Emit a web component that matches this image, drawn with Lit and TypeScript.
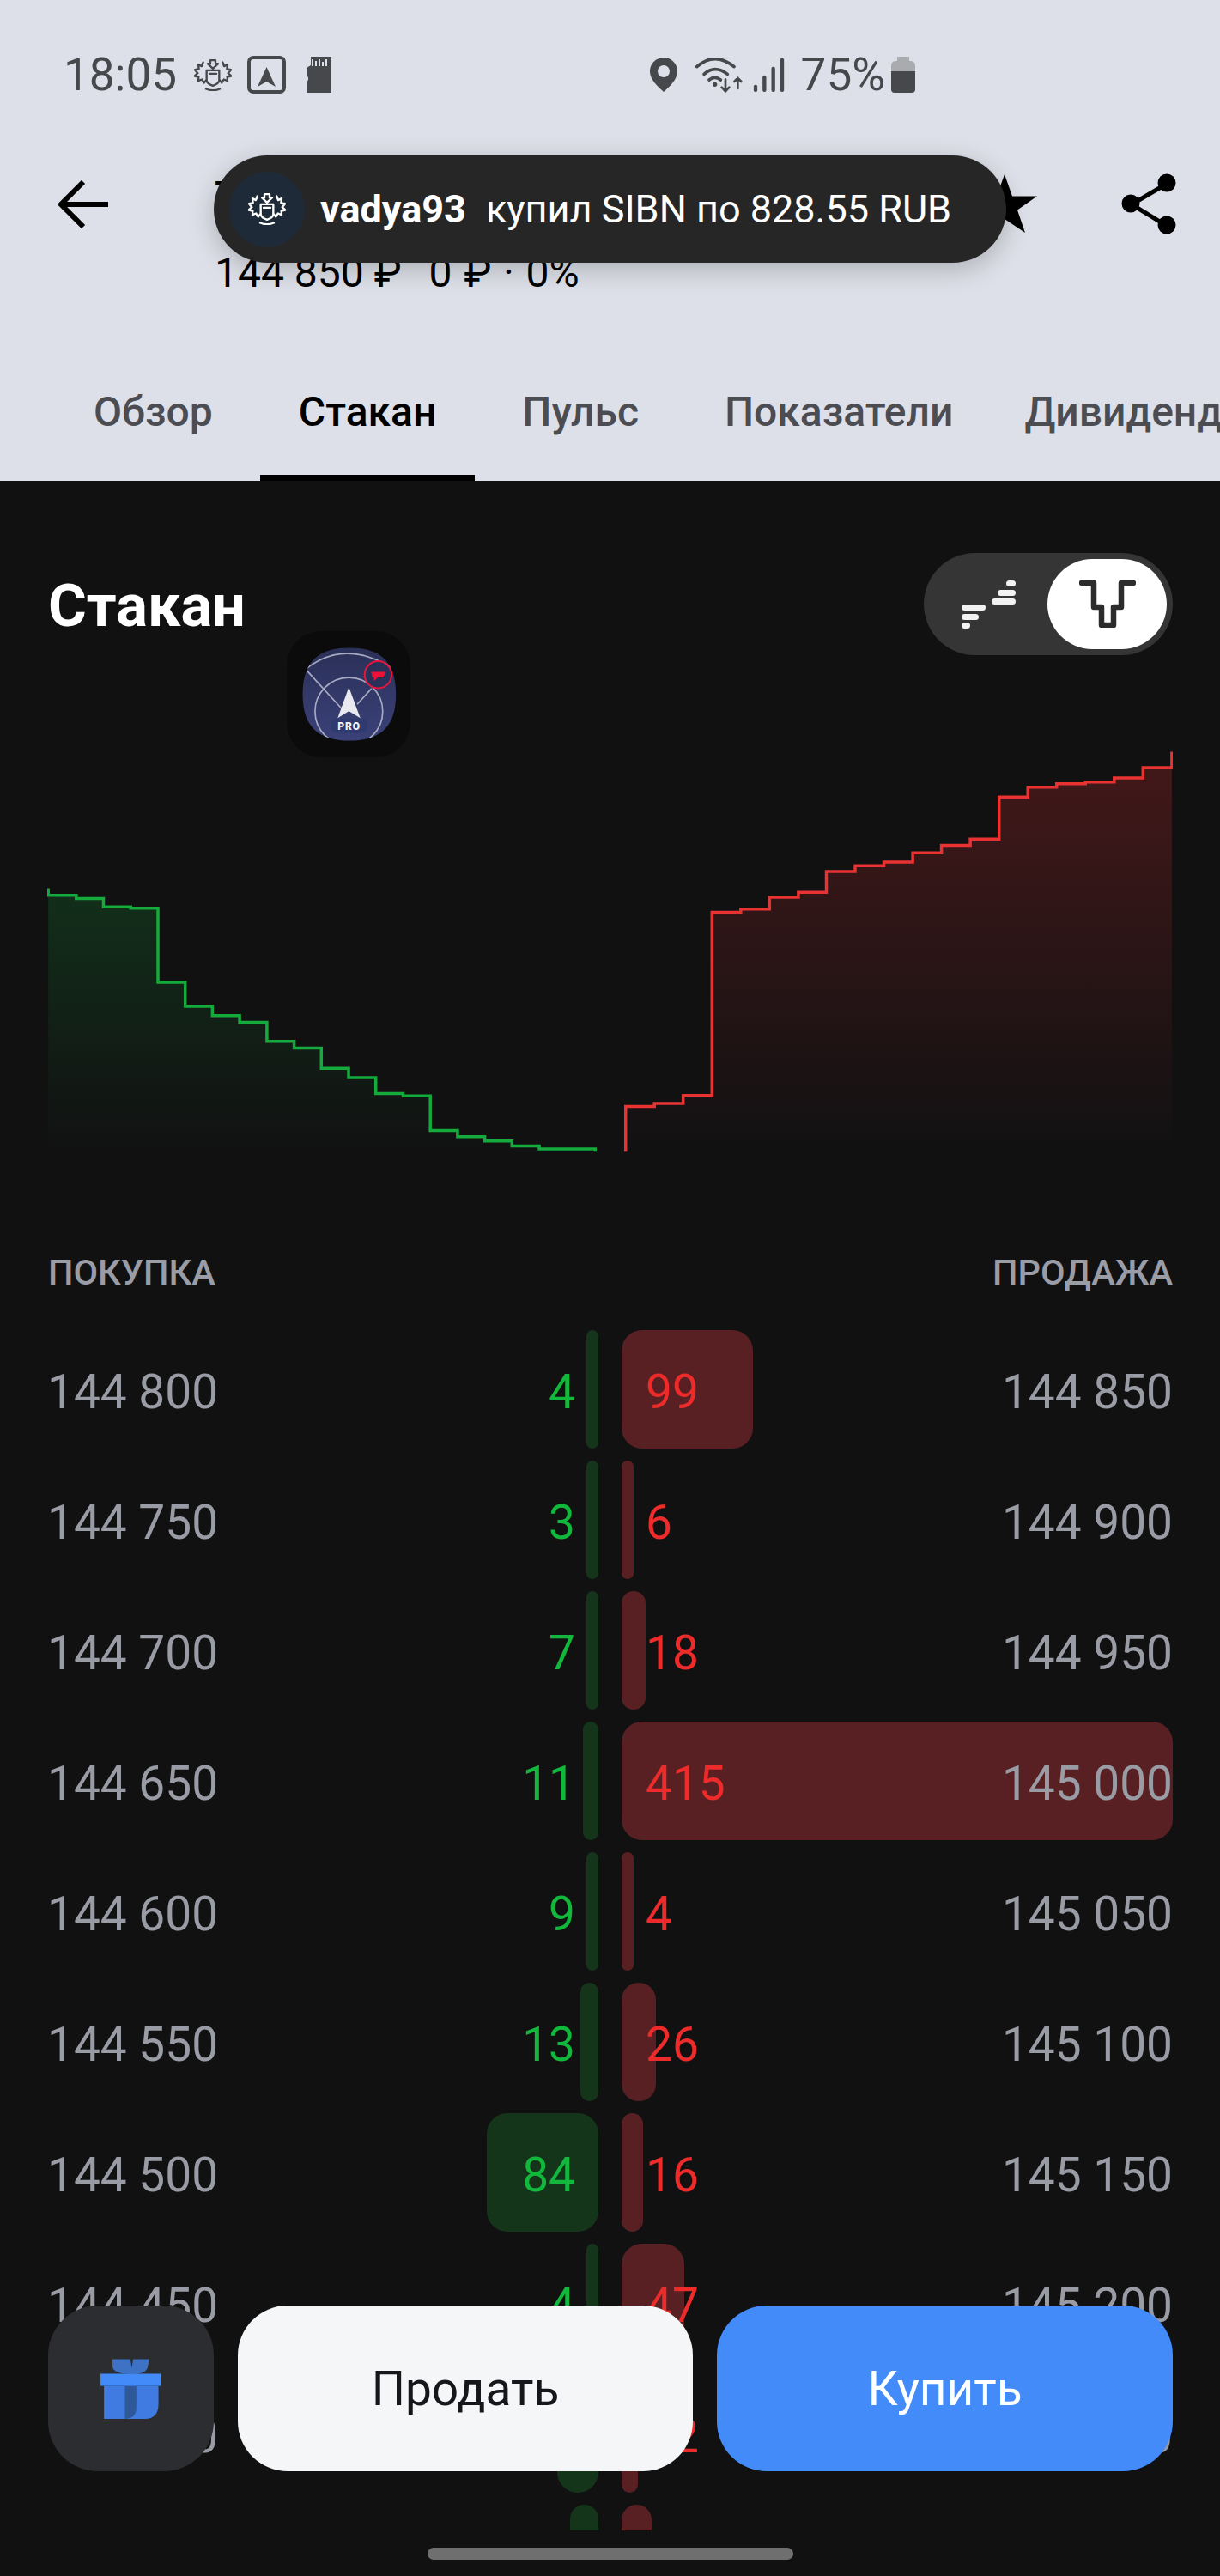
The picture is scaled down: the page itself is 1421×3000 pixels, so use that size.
import { LitElement, html, css, svg } from "lit";
import { customElement } from "lit/decorators.js";

const sx = (x: number) => x / 1.1034;
const sy = (y: number) => 620 + y / 2.063;
const toPts = (p: number[][]) => p.map(([x, y]) => `${sx(x).toFixed(1)},${sy(y).toFixed(1)}`);

function steps(start: [number, number], levels: [number, number][]) {
  const pts: number[][] = [start];
  let y = start[1];
  for (const [x, ny] of levels) {
    pts.push([x, y]);
    pts.push([x, ny]);
    y = ny;
  }
  return pts;
}

const greenPts = [
  [62, 855], [62, 872],
  ...steps([62, 872], [[98, 880], [133, 900], [168, 903], [203, 1081], [238, 1139], [273, 1161], [308, 1177], [343, 1223], [378, 1239], [413, 1288], [448, 1310], [483, 1348], [518, 1354], [553, 1437], [588, 1452], [623, 1462], [658, 1474], [693, 1481], [765, 1488]]).slice(1),
];
const redPts = [
  [804, 1488], [804, 1379],
  ...steps([804, 1379], [[841, 1372], [878, 1353], [915, 913], [952, 905], [989, 877], [1026, 865], [1062, 815], [1099, 801], [1136, 792], [1173, 770], [1210, 752], [1247, 737], [1284, 636], [1321, 612], [1358, 604], [1395, 600], [1432, 590], [1469, 565], [1506, 527]]).slice(1),
];
const greenLine = toPts(greenPts).join(" ");
const redLine = toPts(redPts).join(" ");
const greenFill = `${greenLine} ${sx(765).toFixed(1)},${sy(1488).toFixed(1)} ${sx(62).toFixed(1)},${sy(1488).toFixed(1)}`;
const redFill = `${redLine} ${sx(1506).toFixed(1)},${sy(1488).toFixed(1)}`;

const rows = [
  { bp: "144 800", bq: "4", bw: 14, sq: "99", sw: 153, sp: "144 850" },
  { bp: "144 750", bq: "3", bw: 14, sq: "6", sw: 14, sp: "144 900" },
  { bp: "144 700", bq: "7", bw: 14, sq: "18", sw: 28, sp: "144 950" },
  { bp: "144 650", bq: "11", bw: 18, sq: "415", sw: 642, sp: "145 000" },
  { bp: "144 600", bq: "9", bw: 14, sq: "4", sw: 14, sp: "145 050" },
  { bp: "144 550", bq: "13", bw: 21, sq: "26", sw: 40, sp: "145 100" },
  { bp: "144 500", bq: "84", bw: 130, sq: "16", sw: 25, sp: "145 150" },
  { bp: "144 450", bq: "4", bw: 14, sq: "47", sw: 73, sp: "145 200" },
  { bp: "144 400", bq: "31", bw: 48, sq: "12", sw: 19, sp: "145 250" },
  { bp: "", bq: "", bw: 33, sq: "", sw: 35, sp: "" },
];

const crest = (cls: string) => html`<svg class=${cls} viewBox="0 0 132 110" fill="none" stroke="currentColor" stroke-width="7" stroke-linejoin="round" stroke-linecap="round">
  <path d="M57 3h18v12h9L66 32 48 15h9z" />
  <path d="M44 38h44v34q0 12-22 20-22-8-22-20z" />
  <path d="M54 50h24" />
  <path d="M32 10l-5 14-12-6 2 16-14 2 10 12-11 10 14 3-1 14 13-5 7 12 6-8" />
  <path d="M100 10l5 14 12-6-2 16 14 2-10 12 11 10-14 3 1 14-13-5-7 12-6-8" />
  <path d="M42 103q24 10 48 0" />
</svg>`;

@customElement("app-root")
export class AppRoot extends LitElement {
  static styles = css`
    :host {
      display: block;
      width: 100%;
      height: 3000px;
      position: relative;
      overflow: hidden;
      background: #111112;
      font-family: Roboto, "Liberation Sans", sans-serif;
    }
    svg { display: block; flex: none; }

    .header { height: 560px; background: #dde0e8; display: flex; flex-direction: column; box-sizing: border-box; }

    .status { display: flex; align-items: center; height: 44px; margin-top: 65px; margin-bottom: -1px; padding: 0 355px 0 74px; color: #46484c; }
    .status-text { font-size: 53px; line-height: 44px; letter-spacing: 0; }
    .status-right { margin-left: auto; display: flex; align-items: center; }
    .crest-s { width: 44px; height: 37px; margin-left: 20px; }
    .nav-s { width: 45px; height: 44px; margin-left: 18px; }
    .sd-s { width: 29px; height: 42px; margin-left: 24px; }
    .pin-s { width: 32px; height: 40px; }
    .wifi-s { width: 55px; height: 41px; margin-left: 21px; }
    .sig-s { width: 37px; height: 40px; margin-left: 12px; }
    .pct { margin-left: 19px; }
    .bat-s { width: 28px; height: 42px; margin-left: 7px; }

    .appbar { display: flex; align-items: flex-start; padding: 102px 49px 0 68px; height: 0; }
    .back { width: 58px; height: 56px; }
    .title-block { margin-left: 124px; margin-top: -9px; color: #000; }
    .title { font-size: 48px; line-height: 56px; font-weight: 500; }
    .price { font-size: 48px; line-height: 56px; margin-top: 33px; white-space: pre; }
    .change { margin-left: 32px; word-spacing: 2px; }
    .star { width: 76px; height: 68px; margin-left: auto; margin-top: -7px; }
    .share { width: 66px; height: 72px; margin-left: 98px; margin-top: -8px; }

    .tabs { margin-top: auto; display: flex; gap: 10px; padding-left: 64px; overflow: hidden; white-space: nowrap; }
    .tab { padding: 0 45px 45px; font-size: 48px; line-height: 56px; font-weight: 500; color: #4b4d53; border-bottom: 7px solid transparent; flex: none; }
    .tab.on { color: #000; border-bottom-color: #000; }
    .tab.last { margin-left: -17px; }

    .main { padding: 84px 55px 0 56px; }
    .head { display: flex; justify-content: space-between; align-items: center; height: 119px; }
    h1 { margin: 4px 0 0; font-size: 68.5px; line-height: 76px; font-weight: 700; color: #fff; }
    .toggle { width: 290px; height: 119px; border-radius: 60px; background: #353535; display: flex; align-items: center; box-sizing: border-box; padding-left: 44px; }
    .knob { margin-left: 37px; width: 139px; height: 105px; border-radius: 53px; background: #fff; display: flex; align-items: center; justify-content: center; }
    .ic-bars { width: 63px; height: 56px; }
    .ic-depth { width: 66px; height: 55px; }

    .chart { margin: 112px 0 0 -1px; width: 1311px; height: 470px; }

    .labels { display: flex; justify-content: space-between; margin-top: 114px; font-size: 41.5px; line-height: 46px; font-weight: 500; color: #9a9ca6; }

    .book { margin-top: 44px; height: 1398px; overflow: hidden; display: grid; gap: 14px; align-content: start; }
    .row { display: grid; grid-template-columns: 641px 642px; column-gap: 27px; height: 138px; }
    .cell { position: relative; box-sizing: border-box; padding-top: 6px; display: flex; align-items: center; justify-content: space-between; font-size: 55px; line-height: 64px; }
    .bar { position: absolute; top: 0; bottom: 0; border-radius: 24px; }
    .bar.b { right: 0; background: #143519; }
    .bar.s { left: 0; background: #582022; }
    .num { position: relative; color: #999ba5; }
    .num.first { margin-left: -1px; }
    .qty { position: relative; }
    .qty.b { color: #12b83c; margin-right: 27px; }
    .qty.s { color: #ee2b2b; margin-left: 28px; }

    .toast { position: absolute; left: 249px; top: 181px; width: 923px; height: 125px; box-sizing: border-box; border-radius: 63px; background: #262626; box-shadow: 0 8px 30px rgba(0,0,0,.22); display: flex; align-items: center; padding-left: 18px; color: #fff; font-size: 45px; }
    .toast-logo { width: 88px; height: 88px; border-radius: 50%; background: #1f2a38; display: flex; align-items: center; justify-content: center; flex: none; margin-right: 18px; }
    .crest-t { width: 44px; height: 37px; color: #fff; }
    .toast b { font-weight: 700; margin-right: 23px; }

    .appicon { position: absolute; left: 333px; top: 735px; width: 146px; height: 147px; }

    .actions { position: absolute; left: 56px; right: 55px; top: 2685px; height: 193px; display: grid; grid-template-columns: 193px 530px 531px; column-gap: 28px; }
    .btn { border-radius: 58px; display: flex; align-items: center; justify-content: center; font-size: 55px; }
    .gift { background: #2c2d31; }
    .gift svg { width: 193px; height: 193px; }
    .sell { background: #f5f6f8; color: #16171a; }
    .buy { background: #428bf9; color: #fff; }

    .home { position: absolute; left: 498px; top: 2967px; width: 426px; height: 14px; border-radius: 7px; background: #6f6f6f; }
  `;

  render() {
    return html`
      <div class="header">
        <div class="status">
          <span class="status-text">18:05</span>
          ${crest("crest-s")}
          <svg class="nav-s" viewBox="0 0 45 44"><rect x="2" y="2" width="41" height="40" rx="5" fill="none" stroke="#46484c" stroke-width="4"/><path d="M22.5 13L33 36 22.5 30 12 36z" fill="#46484c"/></svg>
          <svg class="sd-s" viewBox="0 0 29 42"><path fill-rule="evenodd" fill="#46484c" d="M5 0h24v42H0V30l2-3v-3l-2-2v-9l5-3zM6 3v8h2V3zm4 2v6h2V5zm4-2v8h2V3zm4 3v5h2V6zm4-3v8h2V3z"/></svg>
          <div class="status-right">
            <svg class="pin-s" viewBox="0 0 32 40"><path fill-rule="evenodd" fill="#46484c" d="M16 0c9 0 16 7 16 16 0 9-8 17-16 24C8 33 0 25 0 16 0 7 7 0 16 0zm0 9a7 7 0 100 14 7 7 0 000-14z"/></svg>
            <svg class="wifi-s" viewBox="0 0 165 123" fill="none" stroke="#46484c" stroke-linecap="round">
              <path d="M5 32Q68-22 135 32" stroke-width="11"/>
              <path d="M30 58Q68 24 112 58" stroke-width="11"/>
              <path d="M48 78Q68 62 88 78" stroke-width="11"/>
              <circle cx="68" cy="94" r="8" fill="#46484c" stroke="none"/>
              <path d="M105 76v42M92 104l13 14 13-14" stroke-width="8"/>
              <path d="M148 108V72M136 84l12-12 12 12" stroke-width="8"/>
            </svg>
            <svg class="sig-s" viewBox="0 0 110 120" fill="#46484c"><rect x="2" y="95" width="13" height="25" rx="6"/><rect x="33" y="62" width="13" height="58" rx="6"/><rect x="64" y="32" width="13" height="88" rx="6"/><rect x="95" y="2" width="13" height="118" rx="6"/></svg>
            <span class="status-text pct">75%</span>
            <svg class="bat-s" viewBox="0 0 28 42"><path fill="#a9abaf" d="M7 0h14v5h2a5 5 0 015 5v8H0v-8a5 5 0 015-5h2z"/><path fill="#46484c" d="M0 17h28v21a4 4 0 01-4 4H4a4 4 0 01-4-4z"/></svg>
          </div>
        </div>
        <div class="appbar">
          <svg class="back" viewBox="0 0 58 56" fill="none" stroke="#000" stroke-width="6" stroke-linecap="butt"><path d="M4 28h54M29 2L3 28l26 26"/></svg>
          <div class="title-block">
            <div class="title">Транснефть</div>
            <div class="price">144 850 ₽<span class="change">0 ₽ · 0%</span></div>
          </div>
          <svg class="star" viewBox="0 0 76 72" preserveAspectRatio="none"><path fill="#000" d="M38 0l9 27h29L53 44l9 28-24-17-24 17 9-28L0 27h29z"/></svg>
          <svg class="share" viewBox="0 0 66 72"><path d="M53 12L12 36l41 25" fill="none" stroke="#000" stroke-width="5"/><circle cx="53" cy="11" r="10.5"/><circle cx="11" cy="35" r="10.5"/><circle cx="53" cy="60" r="10.5"/></svg>
        </div>
        <div class="tabs">
          <div class="tab">Обзор</div>
          <div class="tab on">Стакан</div>
          <div class="tab">Пульс</div>
          <div class="tab">Показатели</div>
          <div class="tab last">Дивиденды</div>
        </div>
      </div>

      <div class="main">
        <div class="head">
          <h1>Стакан</h1>
          <div class="toggle">
            <svg class="ic-bars" viewBox="0 0 63 56" fill="#f2f2f2">
              <rect x="0" y="28" width="28" height="7" rx="3.5"/><rect x="0" y="39" width="20" height="7" rx="3.5"/><rect x="0" y="49" width="10" height="7" rx="3.5"/>
              <rect x="35" y="21" width="28" height="7" rx="3.5"/><rect x="42" y="11" width="21" height="7" rx="3.5"/><rect x="52" y="0" width="11" height="7" rx="3.5"/>
            </svg>
            <div class="knob">
              <svg class="ic-depth" viewBox="0 0 66 55" fill="none" stroke="#2c2c2c" stroke-width="6.5" stroke-linecap="round" stroke-linejoin="round"><path d="M3 3h14v28h9v21h14V31h9V3h14"/></svg>
            </div>
          </div>
        </div>

        <svg class="chart" viewBox="55 875 1311 470">
          <defs>
            <linearGradient id="gg" x1="0" y1="0" x2="0" y2="1"><stop offset="0" stop-color="#15a83a" stop-opacity=".2"/><stop offset="1" stop-color="#15a83a" stop-opacity="0"/></linearGradient>
            <linearGradient id="rg" x1="0" y1="0" x2="0" y2="1"><stop offset="0" stop-color="#e53030" stop-opacity=".24"/><stop offset="1" stop-color="#e53030" stop-opacity="0"/></linearGradient>
          </defs>
          ${svg`<polygon points=${greenFill} fill="url(#gg)"/>
          <polygon points=${redFill} fill="url(#rg)"/>
          <polyline points=${greenLine} fill="none" stroke="#14ab3c" stroke-width="3.5"/>
          <polyline points=${redLine} fill="none" stroke="#e93333" stroke-width="3.5"/>`}
        </svg>

        <div class="labels"><span>ПОКУПКА</span><span>ПРОДАЖА</span></div>

        <div class="book">
          ${rows.map((r) => html`
            <div class="row">
              <div class="cell">
                <div class="bar b" style="width:${r.bw}px"></div>
                <span class="num first">${r.bp}</span>
                <span class="qty b">${r.bq}</span>
              </div>
              <div class="cell">
                <div class="bar s" style="width:${r.sw}px"></div>
                <span class="qty s">${r.sq}</span>
                <span class="num">${r.sp}</span>
              </div>
            </div>`)}
        </div>
      </div>

      <div class="toast">
        <div class="toast-logo">${crest("crest-t")}</div>
        <b>vadya93</b><span>купил SIBN по 828.55 RUB</span>
      </div>

      <svg class="appicon" viewBox="100 345 430 440">
        <defs>
          <linearGradient id="ni" x1="0" y1="0" x2="0" y2="1"><stop offset="0" stop-color="#2b3058"/><stop offset="1" stop-color="#3a4178"/></linearGradient>
          <clipPath id="nc"><path d="M318 403c110 0 162 50 162 162s-52 162-162 162-163-50-163-162 53-162 163-162z"/></clipPath>
        </defs>
        <rect x="100" y="345" width="430" height="440" rx="120" fill="#0b0b0c"/>
        <path d="M318 403c110 0 162 50 162 162s-52 162-162 162-163-50-163-162 53-162 163-162z" fill="url(#ni)"/>
        <g clip-path="url(#nc)" fill="none" stroke="#a9abc2" stroke-width="5">
          <path d="M165 478Q300 370 470 475"/>
          <path d="M165 478L300 625M395 545L345 600"/>
          <circle cx="316" cy="625" r="118"/>
        </g>
        <polygon points="316,540 356,648 316,624 277,648" fill="#e8e9ef"/>
        <rect x="252" y="650" width="130" height="50" rx="24" fill="#2f3a70"/>
        <text x="317" y="688" text-anchor="middle" font-family="Roboto, sans-serif" font-weight="900" font-size="36" letter-spacing="3" fill="#f2f2f6">PRO</text>
        <circle cx="418" cy="497" r="47" fill="#2b3058" stroke="#e8143c" stroke-width="6"/>
        <path d="M394 487h50l-8 20h-20l-12 12v-12h-6z" fill="#f0103a"/>
      </svg>

      <div class="actions">
        <div class="btn gift">
          <svg viewBox="77 75 578 578">
            <path d="M302 262h62l5 30 5-30h56l-6 30c-6 16-24 22-55 22-40 0-64-8-67-24z" fill="#3e72c4"/>
            <path d="M272 355h190v65c0 35-20 50-45 50H272z" fill="#3f7be0"/>
            <path d="M345 355h40v75c0 20-8 40-40 40z" fill="#2f5899"/>
            <rect x="260" y="313" width="210" height="42" fill="#428bf9"/>
          </svg>
        </div>
        <div class="btn sell">Продать</div>
        <div class="btn buy">Купить</div>
      </div>

      <div class="home"></div>
    `;
  }
}
